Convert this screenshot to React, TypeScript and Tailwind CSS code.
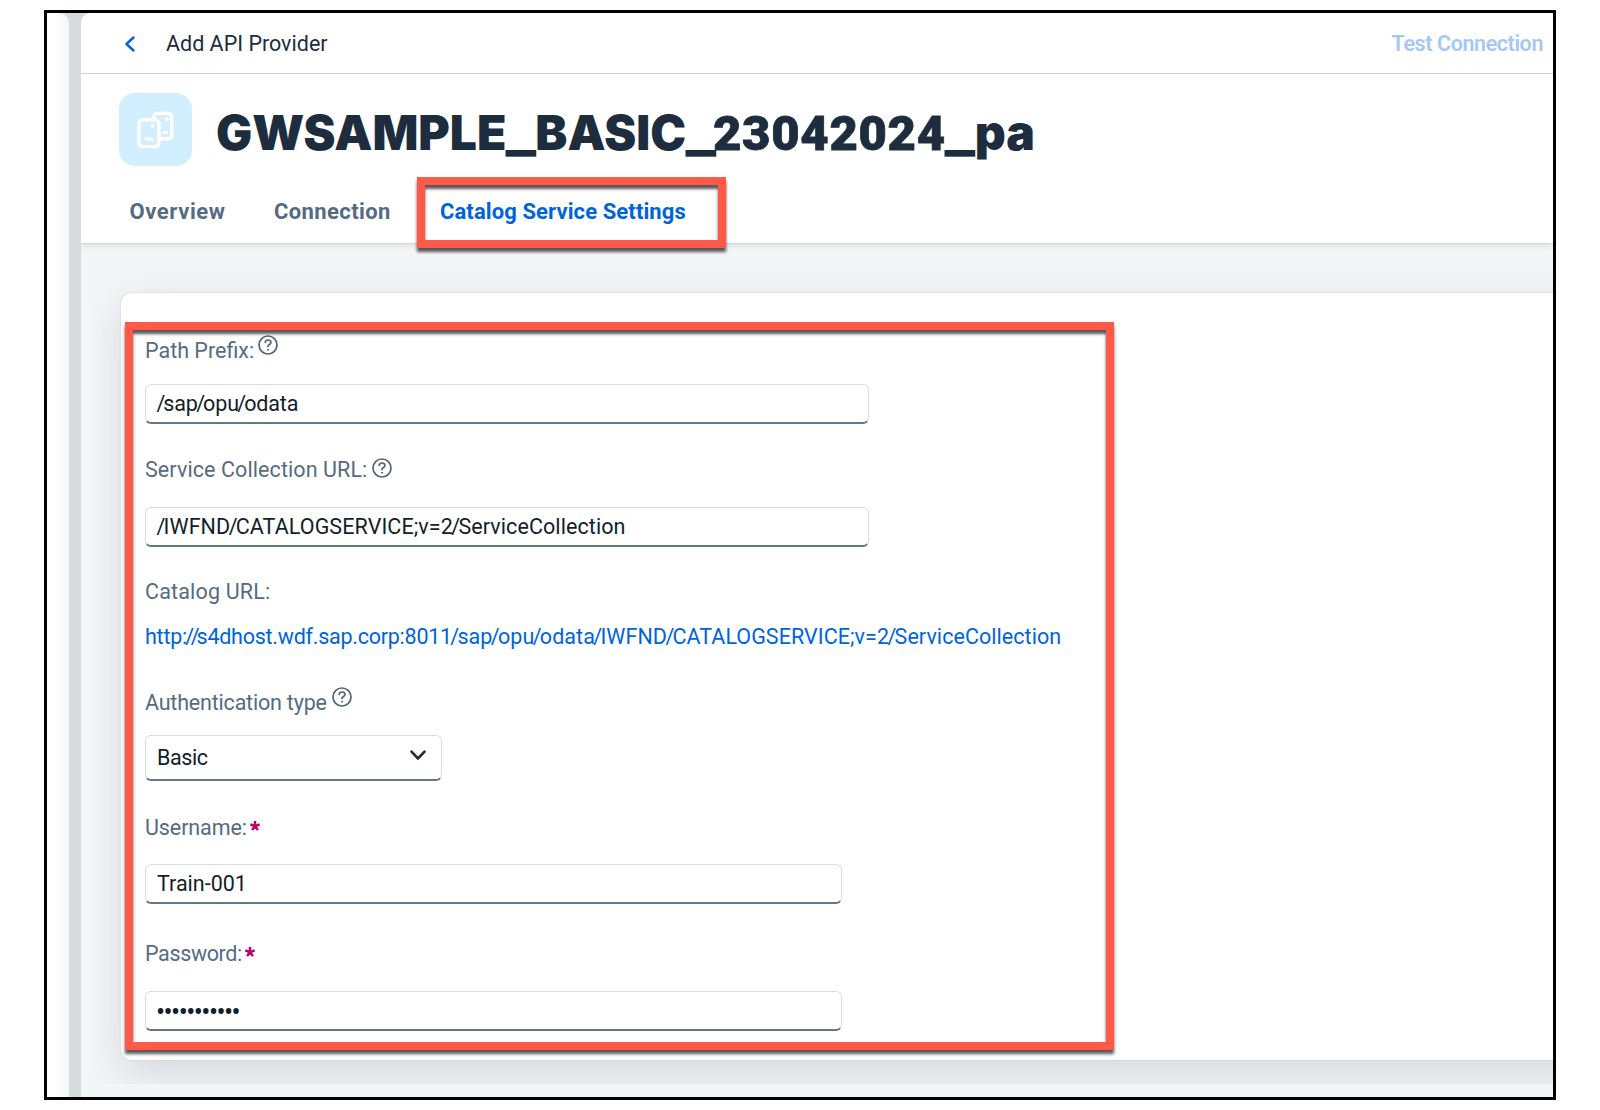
import type { ReactNode } from "react";

function HelpIcon({ className }: { className: string }) {
  return (
    <svg viewBox="0 0 20 20" className={`size-5 shrink-0 ${className}`} fill="none" stroke="#52637a" strokeLinecap="round">
      <circle cx="10" cy="10" r="9" strokeWidth="1.7" />
      <path d="M7.2 7.4C7.4 5.8 8.5 5 10 5c1.7 0 2.9 1 2.9 2.4 0 2.1-2.9 2.2-2.9 4.2" strokeWidth="1.7" />
      <circle cx="10" cy="14.7" r="0.6" fill="#52637a" strokeWidth="0.9" />
    </svg>
  );
}

function Path({ text, className = "" }: { text: string; className?: string }) {
  return (
    <span className={className}>
      {text.split(/(\/+)/).map((part, i) =>
        part.startsWith("/") ? (
          <span key={i} className={`mr-[-1.8px] ml-[-1.6px] ${part.length > 1 ? "tracking-[-1.2px]" : ""}`}>
            {part}
          </span>
        ) : (
          part
        ),
      )}
    </span>
  );
}

function Underscore() {
  return (
    <span className="inline-flex w-[29px] justify-center">
      <span className="scale-x-130">_</span>
    </span>
  );
}

function Label({ children, className = "" }: { children: ReactNode; className?: string }) {
  return <div className={`flex h-[30px] items-center pt-[2px] text-[21.5px] text-[#556b82] ${className}`}>{children}</div>;
}

function Field({ children, className = "" }: { children: ReactNode; className?: string }) {
  return (
    <div
      className={`flex items-center rounded-[6px] border-[1.5px] border-[#d9dde3] border-b-2 border-b-[#62768b] bg-white pt-[2px] pl-[11px] text-[21.5px] text-[#131e29] ${className}`}
    >
      {children}
    </div>
  );
}

function Required({ className = "" }: { className?: string }) {
  return (
    <svg viewBox="0 0 10 10" className={`size-[10px] ${className}`} stroke="#ba066c" strokeWidth="2.5">
      <path d="M5 5V0M5 5L0.3 3.5M5 5L9.7 3.5M5 5L2.1 9.1M5 5L7.9 9.1" />
    </svg>
  );
}

export default function App() {
  return (
    <div className="h-[1110px] w-[1600px] overflow-hidden bg-white pt-[10px] pl-[44px] font-['Roboto',sans-serif] whitespace-nowrap">
      <div className="relative flex h-[1090px] w-[1512px] overflow-hidden border-[3px] border-black bg-[#d7dbdf]">
        <aside className="w-[22px] shrink-0 rounded-tr-[10px] bg-linear-to-r from-white from-40% to-[#f6f7f8]" />
        <main className="ml-3 flex min-w-0 flex-1 flex-col overflow-hidden rounded-tl-[10px] bg-[#f4f5f7]">
          <header className="flex h-[61px] shrink-0 items-center border-b border-[#d4d4d6] bg-white pt-[2px] pr-[10px] pl-[43px]">
            <svg viewBox="0 0 12 16" className="h-4 w-3" fill="none" stroke="#0064d9" strokeWidth="2.4" strokeLinecap="round" strokeLinejoin="round">
              <path d="M9.5 1.5L2.5 8L9.5 14.5" />
            </svg>
            <span className="ml-[30px] text-[21.5px] text-[#1d2d3e]">Add API Provider</span>
            <span className="ml-auto text-[21.5px] font-semibold tracking-[-0.4px] text-[#a5c8f5]">Test Connection</span>
          </header>

          <section className="flex h-[170px] shrink-0 flex-col border-b border-[#d4d5d8] bg-white shadow-[0_2px_6px_rgba(34,53,72,0.10)]">
            <div className="flex pt-[19px] pl-[38px]">
              <div className="flex size-[73px] items-center justify-center rounded-[16px] bg-[#d1efff]">
                <svg viewBox="0 0 38 38" className="size-[38px]" fill="none" stroke="white" strokeWidth="3.4" strokeLinejoin="round" strokeLinecap="round">
                  <rect x="2" y="8.8" width="20" height="26.8" rx="4" />
                  <path d="M16.6 8.4V6.5c0-2.6 1.8-4.3 4.3-4.3h9.6c2.6 0 4.3 1.7 4.3 4.3v17c0 2.6-1.7 4.3-4.3 4.3h-8.5" />
                  <path d="M9.3 28.2h5.8M26.5 21.5h3.2" strokeWidth="3.2" />
                  <circle cx="15.6" cy="15" r="2" fill="white" stroke="none" />
                  <circle cx="30" cy="8.3" r="2" fill="white" stroke="none" />
                </svg>
              </div>
              <h1 className="ml-[24px] pt-[7px] font-['Inter',sans-serif] text-[48px] leading-[66px] font-black text-[#1d2d3e]">
                <span>GWSAMPLE</span>
                <Underscore />
                <span>BASIC</span>
                <Underscore />
                <span className="ml-[-2px] font-['Roboto',sans-serif] text-[49px] tracking-[0.7px] [-webkit-text-stroke:0.8px_#1d2d3e]">23042024</span>
                <Underscore />
                <span>pa</span>
              </h1>
            </div>
            <nav className="flex pt-[31px] pl-[48.5px] text-[22px] leading-[28px] font-bold text-[#556b82]">
              <span className="w-[144.5px] tracking-[0.6px]">Overview</span>
              <span className="w-[166px] tracking-[0.4px]">Connection</span>
              <span className="tracking-[0.1px] text-[#0064d9]">Catalog Service Settings</span>
            </nav>
          </section>

          <div className="ml-[14px] flex h-[840px] flex-col overflow-hidden pt-[49px] pl-[26px]">
            <div className="mr-[-60px] flex h-[767px] flex-col items-start rounded-[11px] bg-white pt-[42px] pl-[24px] shadow-[0_14px_44px_rgba(34,53,72,0.15),0_0_2px_rgba(34,53,72,0.15)]">
              <Label>
                <span>Path Prefix:</span>
                <HelpIcon className="-mt-[12px] ml-[4px]" />
              </Label>
              <Field className="mt-[19px] h-10 w-[724px]">
                <Path text="/sap/opu/odata" className="ml-px tracking-[-0.15px]" />
              </Field>
              <Label className="mt-[30px]">
                <span className="tracking-[0.09px]">Service Collection URL:</span>
                <HelpIcon className="-mt-[4px] ml-[5px]" />
              </Label>
              <Field className="mt-[23px] h-10 w-[724px]">
                <Path text="/IWFND/CATALOGSERVICE;v=2/ServiceCollection" className="ml-px tracking-[0.08px]" />
              </Field>
              <Label className="mt-[29px] tracking-[0.17px]">Catalog URL:</Label>
              <a className="mt-[15px] h-[30px] pt-px text-[21.5px] leading-[30px] text-[#0064d9]">
                <Path text="http://s4dhost.wdf.sap.corp:8011" className="tracking-[-0.25px]" />
                <Path text="/sap/opu/odata/IWFND/CATALOGSERVICE;v=2/ServiceCollection" className="tracking-[0.05px]" />
              </a>
              <Label className="mt-[36px]">
                <span className="tracking-[-0.2px]">Authentication type</span>
                <HelpIcon className="-mt-[12px] ml-[5px]" />
              </Label>
              <Field className="mt-[18px] h-[46px] w-[297px]">
                <span className="tracking-[-0.4px]">Basic</span>
                <svg viewBox="0 0 16 11" className="-mt-[7px] mr-[15px] ml-auto h-[11px] w-4" fill="none" stroke="#1d2d3e" strokeWidth="2.6" strokeLinecap="round" strokeLinejoin="round">
                  <path d="M1.5 1.7L8 8.5L14.5 1.7" />
                </svg>
              </Field>
              <Label className="mt-[31px]">
                <span className="tracking-[-0.1px]">Username:</span>
                <Required className="-mt-[5px] ml-[3px]" />
              </Label>
              <Field className="mt-[22px] h-10 w-[697px]">Train-001</Field>
              <Label className="mt-[34px]">
                <span className="tracking-[-0.36px]">Password:</span>
                <Required className="-mt-[5px] ml-[3px]" />
              </Label>
              <Field className="mt-[23px] h-10 w-[697px]">
                <span className="ml-[-1px] pt-px text-[27px] tracking-[-1.55px]">•••••••••••</span>
              </Field>
            </div>
          </div>
        </main>

        <div className="absolute top-[164px] left-[370px] h-[71px] w-[309px] border-[8px] border-[#ff594a] shadow-[0_4px_3px_rgba(0,0,0,0.65),inset_0_4px_3px_rgba(0,0,0,0.65)]" />
        <div className="absolute top-[309px] left-[78px] h-[728px] w-[989px] border-[8px] border-[#ff594a] shadow-[0_4px_3px_rgba(0,0,0,0.65),inset_0_4px_3px_rgba(0,0,0,0.65)]" />
      </div>
    </div>
  );
}
